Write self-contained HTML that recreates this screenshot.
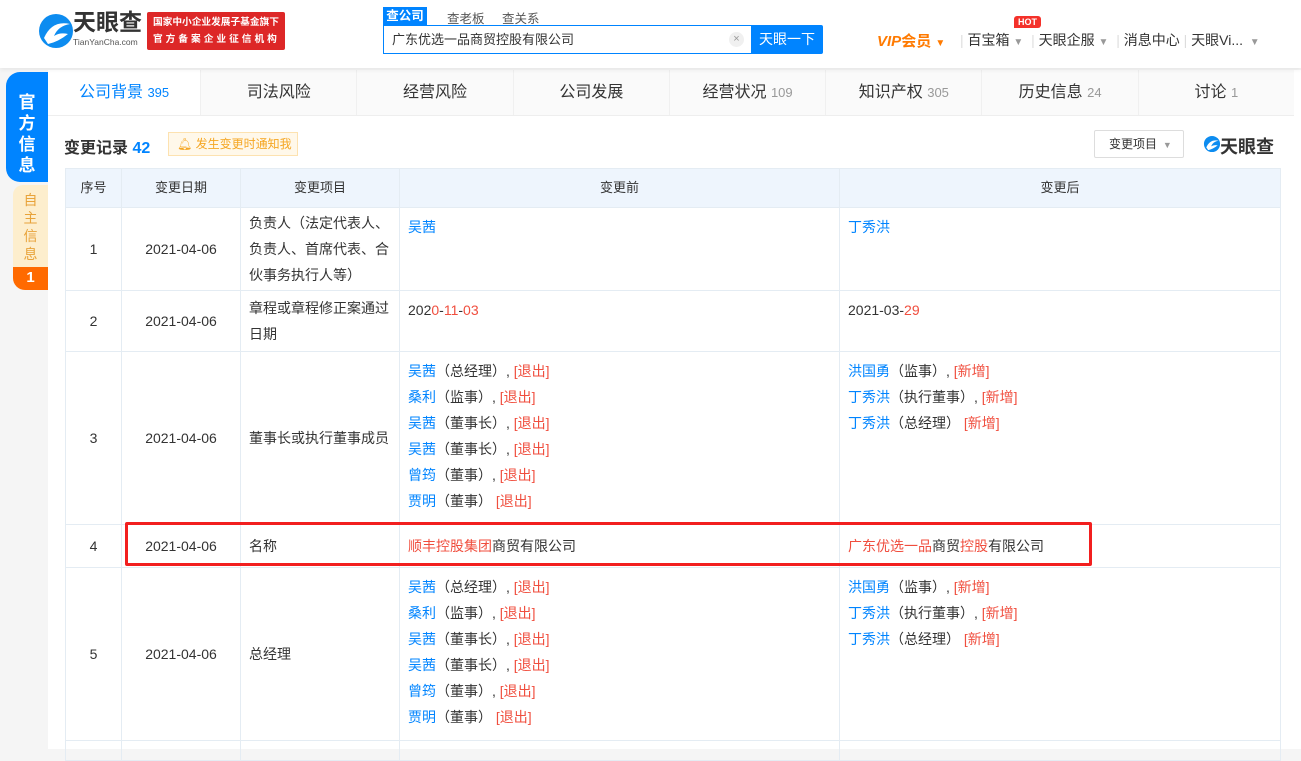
<!DOCTYPE html>
<html><head><meta charset="utf-8"><style>
*{margin:0;padding:0;box-sizing:border-box}
body{width:1301px;height:749px;overflow:hidden;background:#f5f5f5;font-family:"Liberation Sans","Noto Sans CJK SC",sans-serif;font-size:14px;color:#333;position:relative}
.a{position:absolute}
.hdr{left:0;top:0;width:1301px;height:68px;background:#fff;box-shadow:0 2px 4px rgba(0,0,0,.06);z-index:2}
.main{left:48px;top:70px;width:1253px;height:679px;background:#fff}
.tabs{left:48px;top:70px;width:1246px;height:46px;background:#fafafa;border-bottom:1px solid #eee;display:flex}
.tabs div{flex:1;text-align:center;line-height:46px;font-size:16px;color:#333;border-right:1px solid #f0f0f0}
.tabs span{font-size:13px;color:#999}
table{position:absolute;left:65px;top:168px;border-collapse:collapse;table-layout:fixed;width:1215px}
td,th{border:1px solid #e4ecf3;font-weight:normal;vertical-align:middle;padding:0 8px;line-height:26px}
th{background:#eef5fd;height:39px;text-align:center;font-size:13px}
td.c{text-align:center}
.b{color:#0084ff}.r{color:#f04e3e}
.top{vertical-align:top;padding-top:6px}
</style></head><body>
<div class="a hdr">
 <svg class="a" style="left:38px;top:12px" width="36" height="38" viewBox="0 0 36 38"><circle cx="18" cy="19" r="17" fill="#0d8cf0"/><path d="M6 26 Q14 8 32 12 Q20 14 16 24 Q22 20 30 22 Q20 30 10 32Z" fill="#fff"/></svg>
 <div class="a" style="left:73px;top:9px;font-size:23px;font-weight:bold;color:#333;line-height:26px">天眼查</div>
 <div class="a" style="left:73px;top:37px;font-size:8.5px;color:#555;white-space:nowrap">TianYanCha.com</div>
 <div class="a" style="left:147px;top:12px;width:138px;height:38px;background:#dd2727;border-radius:2px;color:#fff;font-size:9.7px;line-height:17px;padding:2px 0 0 6px;font-weight:bold;white-space:nowrap;overflow:hidden">国家中小企业发展子基金旗下<br><span style="letter-spacing:3px">官方备案企业征信机构</span></div>
 <div class="a" style="left:383px;top:7px;width:44px;height:18px;background:#0084ff;color:#fff;font-size:12.5px;line-height:18px;text-align:center;font-weight:bold">查公司</div>
 <div class="a" style="left:447px;top:8px;font-size:12.5px;color:#555">查老板</div>
 <div class="a" style="left:502px;top:8px;font-size:12.5px;color:#555">查关系</div>
 <div class="a" style="left:383px;top:25px;width:369px;height:29px;border:1px solid #0084ff;font-size:13px;line-height:27px;padding-left:8px">广东优选一品商贸控股有限公司<span class="a" style="left:345px;top:6px;width:15px;height:15px;border-radius:50%;background:#f0f0f0;color:#999;font-size:11px;line-height:15px;text-align:center">×</span></div>
 <div class="a" style="left:751px;top:25px;width:72px;height:29px;background:#0084ff;color:#fff;font-size:14px;line-height:29px;text-align:center;border-radius:0 2px 2px 0">天眼一下</div>
 <div class="a" style="left:877px;top:30px;font-size:15px;font-weight:bold;color:#ff7a00;font-style:italic">VIP<span style="font-style:normal">会员</span> <span style="font-size:10px">▼</span></div>
 <div class="a" style="left:1014px;top:16px;background:#f4312a;color:#fff;font-size:9px;padding:0 4px;line-height:12px;border-radius:3px 3px 3px 0;font-weight:bold">HOT</div>
 <div class="a" style="left:960px;top:30px;font-size:14px;color:#333;white-space:nowrap"><span style="color:#ddd">|</span> 百宝箱 <span style="color:#999;font-size:10px">▼</span> &nbsp;<span style="color:#ddd">|</span> 天眼企服 <span style="color:#999;font-size:10px">▼</span> &nbsp;<span style="color:#ddd">|</span> 消息中心 <span style="color:#ddd">|</span> 天眼Vi... <span style="color:#999;font-size:10px">&nbsp;▼</span></div>
</div>
<div class="a main"></div>
<div class="a" style="left:6px;top:72px;width:42px;height:110px;background:#0084ff;border-radius:14px 0 0 14px;color:#fff;font-size:17px;font-weight:bold;line-height:21px;text-align:center;padding-top:20px">官<br>方<br>信<br>息</div>
<div class="a" style="left:13px;top:185px;width:35px;height:105px;background:#fdeecd;border-radius:10px 0 0 12px;overflow:hidden;color:#e8a33a;font-size:14px;line-height:18px;text-align:center;padding-top:6px">自<br>主<br>信<br>息<div style="background:#ff6a00;color:#fff;font-weight:bold;font-size:15px;line-height:22px;margin-top:4px;height:30px">1</div></div>
<div class="a tabs"><div style="color:#0084ff;flex:0.98;background:#fff">公司背景 <span style="color:#0084ff">395</span></div><div>司法风险</div><div>经营风险</div><div>公司发展</div><div>经营状况 <span>109</span></div><div>知识产权 <span>305</span></div><div>历史信息 <span>24</span></div><div style="border:none">讨论 <span>1</span></div></div>
<div class="a" style="left:64px;top:134px;font-size:16px;font-weight:bold">变更记录 <span style="color:#0084ff">42</span></div>
<div class="a" style="left:168px;top:132px;width:130px;height:24px;border:1px solid #fde2b0;background:#fff8ea;color:#f5a623;font-size:12px;line-height:22px;padding-left:8px">🔔︎ 发生变更时通知我</div>
<div class="a" style="left:1094px;top:130px;width:90px;height:28px;border:1px solid #ddd;border-radius:2px;font-size:12px;line-height:26px;padding-left:14px">变更项目 <span style="color:#999;font-size:9px">&nbsp;▼</span></div>
<svg class="a" style="left:1203px;top:135px" width="18" height="18" viewBox="0 0 36 38"><circle cx="18" cy="19" r="17" fill="#0d8cf0"/><path d="M6 26 Q14 8 32 12 Q20 14 16 24 Q22 20 30 22 Q20 30 10 32Z" fill="#fff"/></svg>
<div class="a" style="left:1220px;top:133px;font-size:18px;font-weight:bold;color:#333">天眼查</div>
<table>
<colgroup><col style="width:56px"><col style="width:119px"><col style="width:159px"><col style="width:440px"><col style="width:441px"></colgroup>
<tr><th>序号</th><th>变更日期</th><th>变更项目</th><th>变更前</th><th>变更后</th></tr>
<tr style="height:83px"><td class="c">1</td><td class="c">2021-04-06</td><td>负责人（法定代表人、负责人、首席代表、合伙事务执行人等）</td><td class="top b">吴茜</td><td class="top b">丁秀洪</td></tr>
<tr style="height:61px"><td class="c">2</td><td class="c">2021-04-06</td><td>章程或章程修正案通过日期</td><td class="top">202<span class="r">0</span>-<span class="r">11</span>-<span class="r">03</span></td><td class="top">2021-03-<span class="r">29</span></td></tr>
<tr style="height:173px"><td class="c">3</td><td class="c">2021-04-06</td><td>董事长或执行董事成员</td><td class="top"><span class="b">吴茜</span>（总经理）, <span class="r">[退出]</span><br><span class="b">桑利</span>（监事）, <span class="r">[退出]</span><br><span class="b">吴茜</span>（董事长）, <span class="r">[退出]</span><br><span class="b">吴茜</span>（董事长）, <span class="r">[退出]</span><br><span class="b">曾筠</span>（董事）, <span class="r">[退出]</span><br><span class="b">贾明</span>（董事） <span class="r">[退出]</span></td><td class="top"><span class="b">洪国勇</span>（监事）, <span class="r">[新增]</span><br><span class="b">丁秀洪</span>（执行董事）, <span class="r">[新增]</span><br><span class="b">丁秀洪</span>（总经理） <span class="r">[新增]</span></td></tr>
<tr style="height:43px"><td class="c">4</td><td class="c">2021-04-06</td><td>名称</td><td><span class="r">顺丰控股集团</span>商贸有限公司</td><td><span class="r">广东优选一品</span>商贸<span class="r">控股</span>有限公司</td></tr>
<tr style="height:173px"><td class="c">5</td><td class="c">2021-04-06</td><td>总经理</td><td class="top"><span class="b">吴茜</span>（总经理）, <span class="r">[退出]</span><br><span class="b">桑利</span>（监事）, <span class="r">[退出]</span><br><span class="b">吴茜</span>（董事长）, <span class="r">[退出]</span><br><span class="b">吴茜</span>（董事长）, <span class="r">[退出]</span><br><span class="b">曾筠</span>（董事）, <span class="r">[退出]</span><br><span class="b">贾明</span>（董事） <span class="r">[退出]</span></td><td class="top"><span class="b">洪国勇</span>（监事）, <span class="r">[新增]</span><br><span class="b">丁秀洪</span>（执行董事）, <span class="r">[新增]</span><br><span class="b">丁秀洪</span>（总经理） <span class="r">[新增]</span></td></tr>
<tr style="height:20px"><td></td><td></td><td></td><td></td><td></td></tr>
</table>
<div class="a" style="left:125px;top:522px;width:967px;height:44px;border:3px solid #f21f1f;border-radius:2px"></div>
</body></html>
